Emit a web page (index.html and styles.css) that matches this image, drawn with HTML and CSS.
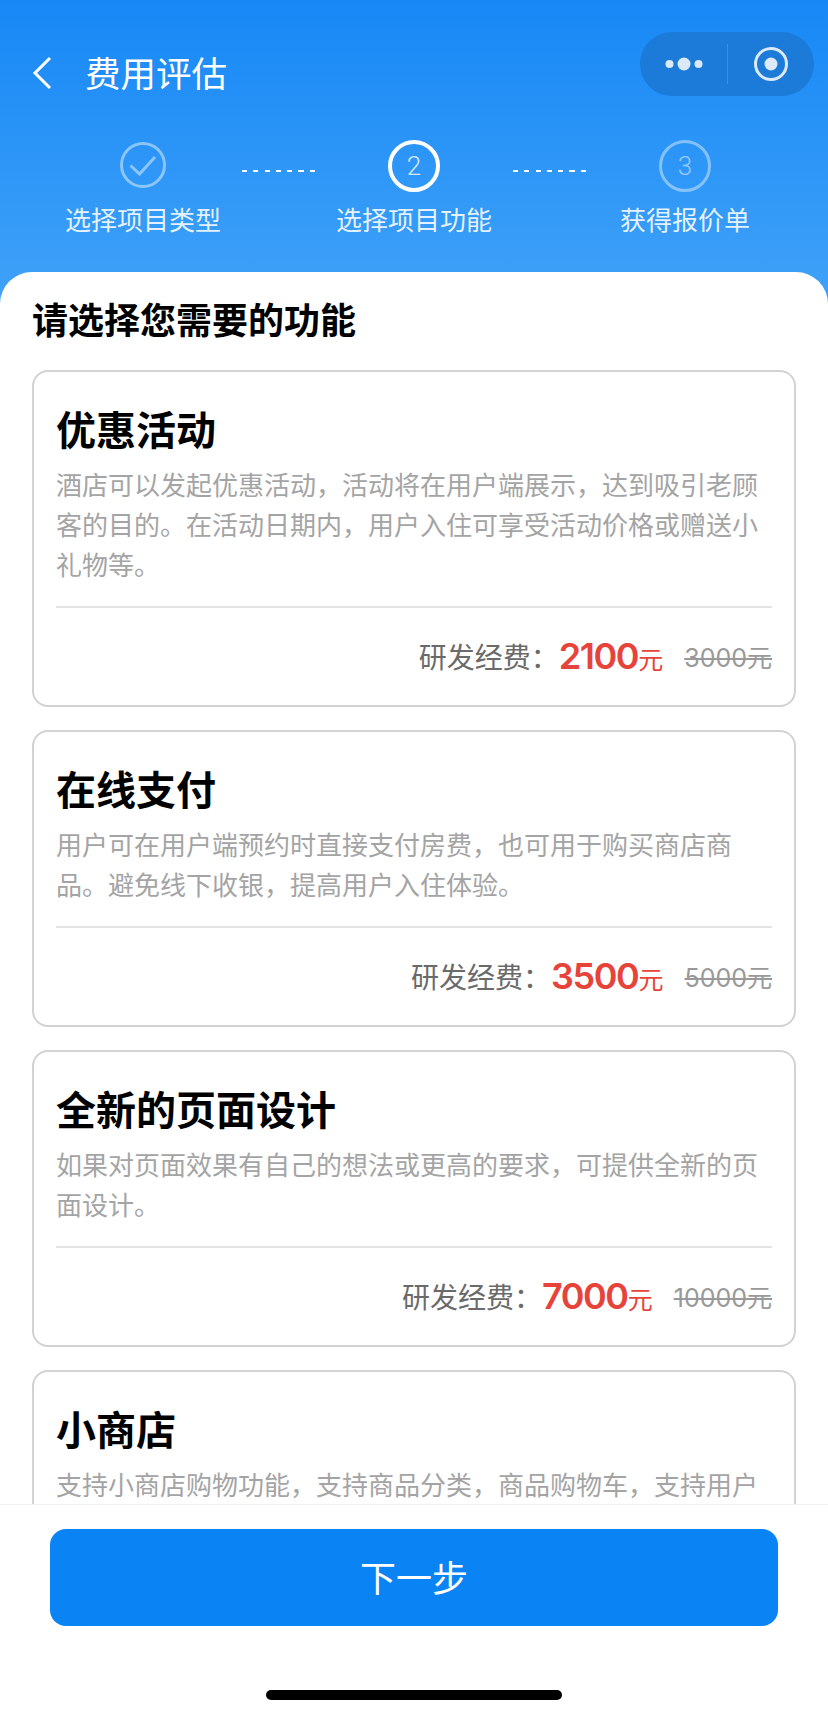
FILE: index.html
```html
<!DOCTYPE html>
<html lang="zh-CN">
<head>
  <meta charset="UTF-8" />
  <meta name="viewport" content="width=device-width, initial-scale=1" />
  <title>费用评估</title>
  <link rel="stylesheet" href="styles.css">
</head>
<body>
  <div class="page">
    <header class="top">
      <div class="nav">
        <svg class="back" width="20" height="34" viewBox="0 0 20 34" aria-label="返回">
          <path d="M18 2 L3 17 L18 32" fill="none" stroke="#fff" stroke-width="3" />
        </svg>
        <div class="nav-title">费用评估</div>
        <div class="capsule">
          <svg class="capsule-more" width="38" height="16" viewBox="0 0 38 16">
            <circle cx="4.5" cy="8" r="4" />
            <circle cx="19" cy="8" r="6.5" />
            <circle cx="33.5" cy="8" r="4" />
          </svg>
          <span class="capsule-line"></span>
          <svg class="capsule-close" width="36" height="36" viewBox="0 0 36 36">
            <circle cx="18" cy="18" r="15.5" fill="none" stroke-width="3" />
            <circle class="dot" cx="18" cy="18" r="6.5" />
          </svg>
        </div>
      </div>

      <div class="steps">
        <div class="step">
          <div class="step-mark">
            <svg width="48" height="48" viewBox="0 0 48 48">
              <circle cx="24" cy="23" r="21.5" fill="none" stroke="#fff" stroke-opacity="0.45" stroke-width="3" />
              <path d="M11.5 23.5 L20.5 32 L36 15" fill="none" stroke="#fff" stroke-opacity="0.45" stroke-width="3" />
            </svg>
          </div>
          <div class="step-label">选择项目类型</div>
        </div>
        <div class="step-dash"></div>
        <div class="step">
          <div class="step-mark"><span class="step-num step-num-on">2</span></div>
          <div class="step-label">选择项目功能</div>
        </div>
        <div class="step-dash"></div>
        <div class="step">
          <div class="step-mark"><span class="step-num">3</span></div>
          <div class="step-label">获得报价单</div>
        </div>
      </div>
    </header>

    <main class="panel">
      <h2 class="panel-title">请选择您需要的功能</h2>

      <section class="card">
        <h3 class="card-title">优惠活动</h3>
        <p class="card-desc">酒店可以发起优惠活动，活动将在用户端展示，达到吸引老顾客的目的。在活动日期内，用户入住可享受活动价格或赠送小礼物等。</p>
        <div class="card-foot">
          <span class="cost-label">研发经费：</span>
          <span class="cost"><b>2100</b>元</span>
          <s class="cost-old">3000元</s>
        </div>
      </section>

      <section class="card">
        <h3 class="card-title">在线支付</h3>
        <p class="card-desc">用户可在用户端预约时直接支付房费，也可用于购买商店商品。避免线下收银，提高用户入住体验。</p>
        <div class="card-foot">
          <span class="cost-label">研发经费：</span>
          <span class="cost"><b>3500</b>元</span>
          <s class="cost-old">5000元</s>
        </div>
      </section>

      <section class="card">
        <h3 class="card-title">全新的页面设计</h3>
        <p class="card-desc">如果对页面效果有自己的想法或更高的要求，可提供全新的页面设计。</p>
        <div class="card-foot">
          <span class="cost-label">研发经费：</span>
          <span class="cost"><b>7000</b>元</span>
          <s class="cost-old">10000元</s>
        </div>
      </section>

      <section class="card">
        <h3 class="card-title">小商店</h3>
        <p class="card-desc">支持小商店购物功能，支持商品分类，商品购物车，支持用户</p>
      </section>
    </main>

    <footer class="bottom">
      <button class="next">下一步</button>
      <div class="home-bar"></div>
    </footer>
  </div>
</body>
</html>
```

FILE: styles.css
```css
/* Reset */
* {
  box-sizing: border-box;
}
html, body {
  margin: 0;
  padding: 0;
  background: #fff;
  font-family: "Liberation Sans", "Noto Sans CJK SC", sans-serif;
}

.page {
  width: 828px;
  height: 1716px;
  display: flex;
  flex-direction: column;
  overflow: hidden;
  background: linear-gradient(180deg, #1788f6 0, #40a2f8 304px, #fff 304px);
}

/* Blue header */
.top {
  height: 272px;
  flex: none;
  padding-top: 32px;
  color: #fff;
}

.nav {
  display: flex;
  align-items: flex-start;
  height: 64px;
  padding: 0 14px 0 32px;
}
.back {
  margin-top: 24px;
  flex: none;
}
.nav-title {
  margin: 13px 0 0 33px;
  font-size: 35.5px;
  line-height: 60px;
  flex: 1;
}
.capsule {
  width: 174px;
  height: 64px;
  flex: none;
  display: flex;
  align-items: center;
  border-radius: 32px;
  background: #1c7bd8;
}
.capsule-more {
  margin-left: 25px;
  fill: #dbe9f8;
}
.capsule-line {
  width: 1px;
  height: 40px;
  margin-left: 24px;
  background: #3b8fe0;
}
.capsule-close {
  margin-left: 25px;
  stroke: #dbe9f8;
}
.capsule-close .dot {
  fill: #dbe9f8;
  stroke: none;
}

/* Steps */
.steps {
  display: flex;
  align-items: flex-start;
  margin-top: 44px;
  padding-left: 53px;
}
.step {
  width: 180px;
  display: flex;
  flex-direction: column;
  align-items: center;
}
.step-mark {
  height: 52px;
  display: flex;
  align-items: center;
  justify-content: center;
}
.step-num {
  width: 52px;
  height: 52px;
  display: flex;
  align-items: center;
  justify-content: center;
  border: 3px solid rgba(255, 255, 255, 0.42);
  border-radius: 50%;
  font-family: Roboto, sans-serif;
  font-weight: 300;
  font-size: 26px;
  color: rgba(255, 255, 255, 0.5);
}
.step-num-on {
  border: 4px solid #fff;
  color: rgba(255, 255, 255, 0.8);
}
.step-label {
  margin-top: 11px;
  font-size: 26px;
  line-height: 36px;
  color: rgba(255, 255, 255, 0.88);
}
.step-dash {
  width: 74px;
  height: 2px;
  margin: 30px 8px 0 9px;
  flex: none;
  background: repeating-linear-gradient(90deg, #fff 0 5px, transparent 5px 11.3px);
}

/* White panel */
.panel {
  flex: 1;
  min-height: 0;
  overflow: hidden;
  padding: 25px 32px 0;
  background: #fff;
  border-radius: 32px 32px 0 0;
}
.panel-title {
  margin: 0 0 23px;
  font-size: 36px;
  line-height: 50px;
  font-weight: 700;
  color: #000;
}

.card {
  margin-bottom: 23px;
  padding: 31px 22px 0;
  border: 2px solid #d2d2d2;
  border-radius: 16px;
  background: #fff;
}
.card-title {
  margin: 0 0 7px;
  font-size: 40px;
  line-height: 56px;
  font-weight: 700;
  color: #000;
}
.card-desc {
  margin: 0 0 20px;
  font-size: 26px;
  line-height: 40px;
  color: #a4a4a4;
}
.card-foot {
  height: 99px;
  padding-bottom: 2px;
  display: flex;
  justify-content: flex-end;
  align-items: center;
  border-top: 2px solid #e4e4e4;
}
.cost-label {
  font-size: 28px;
  color: #6a6a6a;
}
.cost {
  font-size: 25px;
  color: #e6443a;
}
.cost b {
  font-family: Inter, sans-serif;
  font-size: 36px;
  font-weight: 600;
  letter-spacing: -1.4px;
}
.cost-old {
  margin-left: 21px;
  font-family: Inter, "Noto Sans CJK SC", sans-serif;
  font-size: 25px;
  color: #999;
}

/* Bottom bar */
.bottom {
  height: 212px;
  flex: none;
  padding: 24px 50px 0;
  border-top: 1px solid #f1f1f1;
  background: #fff;
}
.next {
  display: block;
  width: 100%;
  height: 97px;
  padding: 0 0 3px;
  border: none;
  border-radius: 16px;
  background: #0a84f5;
  color: #fff;
  font-family: inherit;
  font-size: 36px;
}
.home-bar {
  width: 296px;
  height: 10px;
  margin: 64px auto 0;
  border-radius: 5px;
  background: #000;
}
```
